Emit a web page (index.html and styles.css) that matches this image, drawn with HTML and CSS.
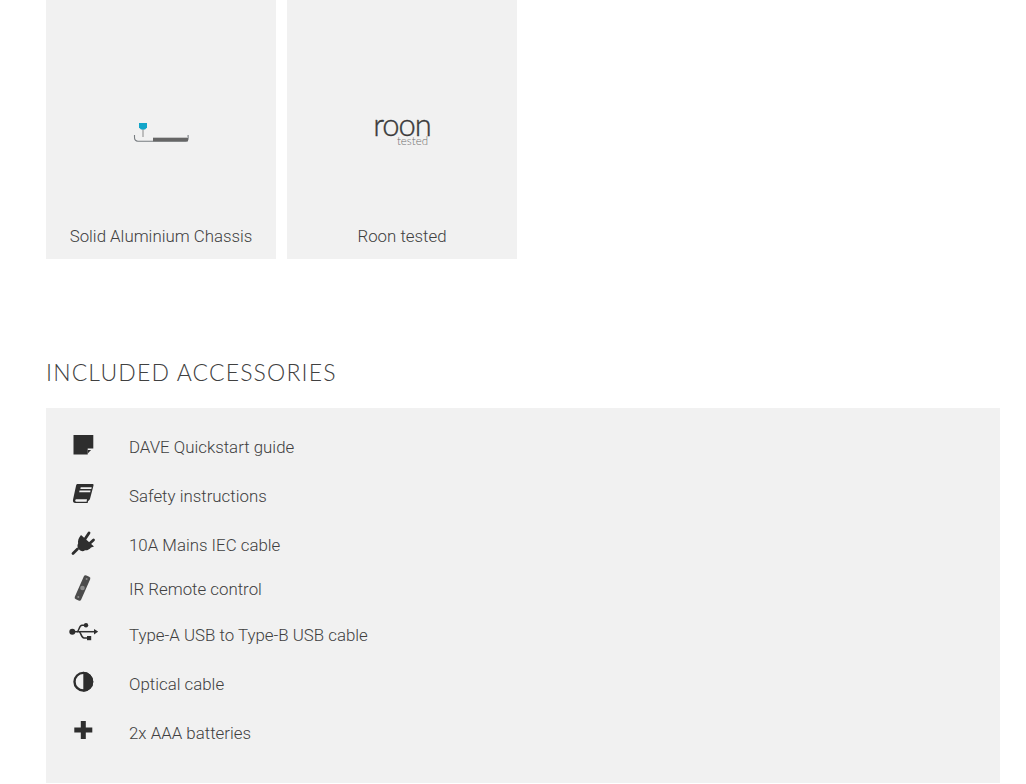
FILE: index.html
```html
<!DOCTYPE html>
<html lang="en">
<head>
<meta charset="utf-8">
<title>DAVE</title>
<link rel="stylesheet" href="styles.css">
</head>
<body>
<main class="page">
  <section class="cards">
    <article class="card">
      <div class="card-media">
        <svg class="chassis" width="56" height="22" viewBox="133 121 56 22" aria-hidden="true">
          <path class="chassis-tray" d="M134.5 135v2.6c0 2.2 1.2 3.6 3.4 3.6h47.6c1.8 0 2.6-1.4 2.6-3.2V135"/>
          <rect class="chassis-light" x="153" y="137" width="34" height="1"/>
          <rect class="chassis-bar" x="153" y="138" width="35" height="3.4"/>
          <rect class="chassis-stem" x="142" y="128" width="2" height="9"/>
          <path class="chassis-tip" d="M139 123h8v4.5l-2 2h-4l-2-2z"/>
        </svg>
      </div>
      <p class="card-caption">Solid Aluminium Chassis</p>
    </article>
    <article class="card">
      <div class="card-media">
        <div class="roon">
          <span class="roon-word">roon</span>
          <span class="roon-sub">tested</span>
        </div>
      </div>
      <p class="card-caption">Roon tested</p>
    </article>
  </section>

  <h2 class="section-title">INCLUDED ACCESSORIES</h2>

  <ul class="accessories">
    <li class="item">
      <svg class="icon" viewBox="68 432 30 30" aria-hidden="true">
        <path class="ink" d="M73.5 435h19.8v13.6h-5.6v5.9H73.5z"/>
        <path class="ink" d="M87.7 450h3.4l-3.4 3.4z"/>
      </svg>
      <span class="label">DAVE Quickstart guide</span>
    </li>
    <li class="item">
      <svg class="icon" viewBox="68 481 30 30" aria-hidden="true">
        <path class="ink" d="M77.5 484h15c.9 0 1.2.6 1 1.4l-3.4 13.2c-.3 1.2-.9 2-2.1 2.6l-.3 1.8H75.5c-2.2 0-3-1.6-2.4-3.8l3-13.6c.2-1 .6-1.6 1.4-1.6z"/>
        <path class="cut" d="M75.3 500.3c-.4 1 .2 1.4 1 1.4h10.3l.4-2.4H76.2c-.5 0-.8.4-.9 1z"/>
        <rect class="cut" x="78.6" y="487.3" width="11" height="1.6" transform="skewX(-10) translate(88 0)"/>
        <rect class="cut" x="78" y="490.6" width="11" height="1.6" transform="skewX(-10) translate(88 0)"/>
      </svg>
      <span class="label">Safety instructions</span>
    </li>
    <li class="item">
      <svg class="icon" viewBox="68 530 30 30" aria-hidden="true">
        <path class="line" d="M85 539l4-6M88.5 544.5l5-4.5"/>
        <path class="ink" d="M81 535l13 11.5-3 1c-1.5 2-3.5 3-6 2.8-2 1.4-4 1-5.9-.8-1.7-1.7-2.2-4-1-5.9-.4-3 .4-5.6 2.9-8.6z"/>
        <path class="line" d="M77.5 549l-4.5 4.5"/>
      </svg>
      <span class="label">10A Mains IEC cable</span>
    </li>
    <li class="item item-close">
      <svg class="icon" viewBox="68 574 30 30" aria-hidden="true">
        <rect class="remote" x="79" y="575" width="7" height="26" rx="2" transform="rotate(24 82.5 588)"/>
        <circle class="remote-key" cx="82.5" cy="588" r="2.3"/>
        <circle class="remote-dot" cx="78.3" cy="597" r="1"/>
        <circle class="remote-dot" cx="86.6" cy="579" r="1"/>
      </svg>
      <span class="label">IR Remote control</span>
    </li>
    <li class="item item-near">
      <svg class="icon" viewBox="68 620 30 30" aria-hidden="true">
        <circle class="ink" cx="72.3" cy="631.7" r="3"/>
        <path class="thin" d="M74 631.7h21"/>
        <path class="thin" d="M77 631.7c2 0 2-6.4 5-6.4h3M79 631.7c2 0 2 6.3 5 6.3h3"/>
        <circle class="ink" cx="86" cy="625.2" r="2.2"/>
        <rect class="ink" x="87" y="636" width="4.2" height="4.2"/>
        <path class="ink" d="M94 629l4.2 2.7-4.2 2.7z"/>
      </svg>
      <span class="label">Type-A USB to Type-B USB cable</span>
    </li>
    <li class="item">
      <svg class="icon" viewBox="68 669 30 30" aria-hidden="true">
        <circle class="ring" cx="83.3" cy="681.7" r="8.8"/>
        <path class="ink" d="M83.3 671.7a10 10 0 0 1 0 20z"/>
      </svg>
      <span class="label">Optical cable</span>
    </li>
    <li class="item">
      <svg class="icon" viewBox="68 718 30 30" aria-hidden="true">
        <path class="ink" d="M80.8 721h5v6.5h6.5v5h-6.5v6.5h-5v-6.5h-6.5v-5h6.5z"/>
      </svg>
      <span class="label">2x AAA batteries</span>
    </li>
  </ul>
</main>
</body>
</html>
```

FILE: styles.css
```css
* {
  box-sizing: border-box;
}

html,
body {
  margin: 0;
  padding: 0;
  background: #fff;
}

body {
  color: #404040;
  font-family: Roboto, "Liberation Sans", sans-serif;
  font-size: 16.85px;
  font-weight: 300;
  line-height: 20px;
}

.page {
  display: flex;
  flex-direction: column;
  padding: 0 26px 0 46px;
}

.cards {
  display: flex;
  gap: 11px;
}

.card {
  display: flex;
  flex-direction: column;
  width: 230px;
  height: 259px;
  background: #f1f1f1;
}

.card-media {
  display: flex;
  align-items: center;
  justify-content: center;
  height: 226px;
  padding-top: 38px;
}

.card-caption {
  margin: 0;
  text-align: center;
}

.chassis {
  display: block;
}

.chassis-tray {
  fill: none;
  stroke: #777c80;
  stroke-width: 1.1;
}

.chassis-light {
  fill: #c4c4c4;
}

.chassis-bar {
  fill: #666;
}

.chassis-stem {
  fill: #bdbdbd;
}

.chassis-tip {
  fill: #12a5c9;
}

.roon {
  display: flex;
  flex-direction: column;
  align-items: center;
  width: 56px;
  height: 36px;
  margin-top: -3px;
}

.roon-word {
  color: #3a3a3a;
  font-family: Lato, sans-serif;
  font-size: 31px;
  font-weight: 300;
  letter-spacing: -1px;
  line-height: 23px;
  white-space: nowrap;
  -webkit-text-stroke: 0.35px #3a3a3a;
}

.roon-sub {
  align-self: flex-end;
  margin-right: 2px;
  color: #6f6f6f;
  font-family: Lato, sans-serif;
  font-size: 11.5px;
  line-height: 10px;
}

.section-title {
  margin: 99px 0 22px;
  color: #404040;
  font-family: Lato, sans-serif;
  font-size: 23px;
  font-weight: 300;
  letter-spacing: 1.15px;
  line-height: 28px;
}

.accessories {
  display: flex;
  flex-direction: column;
  margin: 0;
  padding: 24px 0 16px 22px;
  background: #f1f1f1;
  list-style: none;
}

.item {
  display: flex;
  align-items: center;
  gap: 31px;
  height: 30px;
  margin-bottom: 19px;
}

.item-close {
  margin-bottom: 16px;
}

.item-near {
  margin-bottom: 19px;
}

.item:nth-child(3) {
  margin-bottom: 14px;
}

.icon {
  display: block;
  flex: none;
  width: 30px;
  height: 30px;
}

.ink {
  fill: #2e2e2e;
}

.cut {
  fill: #f1f1f1;
}

.line {
  fill: none;
  stroke: #2e2e2e;
  stroke-width: 2.8;
  stroke-linecap: round;
}

.thin {
  fill: none;
  stroke: #2e2e2e;
  stroke-width: 1.5;
}

.ring {
  fill: none;
  stroke: #2e2e2e;
  stroke-width: 2.4;
}

.remote {
  fill: #4c4c4c;
}

.remote-key {
  fill: #8d8d8d;
}

.remote-dot {
  fill: #8d8d8d;
}
```
